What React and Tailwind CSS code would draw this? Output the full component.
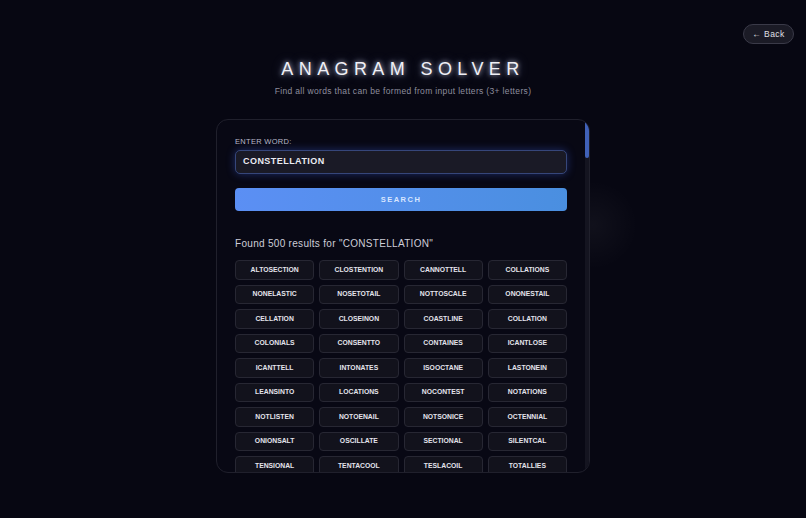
import React from 'react';

// Words visible at the top of the results list
const words = [
    'ALTOSECTION', 'CLOSTENTION', 'CANNOTTELL', 'COLLATIONS',
    'NONELASTIC', 'NOSETOTAIL', 'NOTTOSCALE', 'ONONESTAIL',
    'CELLATION', 'CLOSEINON', 'COASTLINE', 'COLLATION',
    'COLONIALS', 'CONSENTTO', 'CONTAINES', 'ICANTLOSE',
    'ICANTTELL', 'INTONATES', 'ISOOCTANE', 'LASTONEIN',
    'LEANSINTO', 'LOCATIONS', 'NOCONTEST', 'NOTATIONS',
    'NOTLISTEN', 'NOTOENAIL', 'NOTSONICE', 'OCTENNIAL',
    'ONIONSALT', 'OSCILLATE', 'SECTIONAL', 'SILENTCAL',
    'TENSIONAL', 'TENTACOOL', 'TESLACOIL', 'TOTALLIES',
];

const font = { fontFamily: '"Liberation Sans", Arial, sans-serif' };

const WordChip = ({ word }) => (
    <div className="h-[19.5px] flex items-center justify-center rounded-[4px] border border-[#272733] bg-[#12121c] text-[6.8px] font-bold text-[#e4e4ec]">
        {word}
    </div>
);

export default function App() {
    return (
        <div className="relative min-h-screen overflow-hidden bg-[#070712] text-white" style={font}>
            {/* faint glow blob next to the card */}
            <div className="pointer-events-none absolute left-[548px] top-[180px] h-[90px] w-[90px] rounded-full bg-[radial-gradient(circle,rgba(255,255,255,0.04)_0%,rgba(255,255,255,0)_70%)]"></div>

            {/* Top bar */}
            <div className="flex justify-end pt-[24px] pr-[12px]">
                <button className="h-[20px] w-[51px] rounded-full border border-[#3a3a48] bg-[#1b1b26] text-[8.5px] tracking-[0.05em] text-[#e0e0e8]">
                    ← Back
                </button>
            </div>

            <div className="flex flex-col items-center">
                <h1 className="mt-[14px] text-[18px] leading-[22px] font-normal tracking-[0.3em] text-[#f0f0f6] [text-shadow:0_0_5px_rgba(230,235,255,0.8),0_0_12px_rgba(170,190,255,0.4)]">
                    ANAGRAM SOLVER
                </h1>
                <p className="mt-[5px] text-[8.5px] leading-[12px] tracking-[0.04em] text-[#8e8e9e]">
                    Find all words that can be formed from input letters (3+ letters)
                </p>

                {/* Results card (scrolls in the app; shown at its top here) */}
                <div className="relative mt-[22px] mb-[46px] h-[354px] w-[374px] overflow-hidden rounded-[12px] border border-[#20202c] bg-[#080814] pl-[18px] pr-[22px] pt-[17px]">
                    <label className="block text-[7.5px] leading-[10px] tracking-[0.04em] text-[#b8b8c8]">
                        ENTER WORD:
                    </label>
                    <div className="mt-[3px] h-[24px] flex items-center rounded-[5px] border border-[#36467a] bg-[#1a1a26] px-[7px] text-[9px] font-semibold tracking-[0.05em] text-[#ececf2] shadow-[0_0_8px_rgba(70,110,255,0.35)]">
                        CONSTELLATION
                    </div>
                    <button className="mt-[14px] h-[23px] w-full rounded-[4px] bg-gradient-to-r from-[#5b8ff4] to-[#4a8fe0] text-[7.5px] font-bold tracking-[0.2em] text-[#d8e6ff]">
                        SEARCH
                    </button>

                    <p className="mt-[27px] text-[10px] leading-[12px] tracking-[0.03em] text-[#cdcdd8]">
                        Found 500 results for "CONSTELLATION"
                    </p>

                    <div className="mt-[10px] grid grid-cols-4 gap-[5px]">
                        {words.map((w, i) => (
                            <WordChip key={i} word={w} />
                        ))}
                    </div>

                    {/* scrollbar */}
                    <div className="absolute right-0 top-0 bottom-0 w-[4px] bg-[#141420]">
                        <div className="h-[38px] w-full rounded-full bg-[#4061b8]"></div>
                    </div>
                </div>
            </div>
        </div>
    );
}
